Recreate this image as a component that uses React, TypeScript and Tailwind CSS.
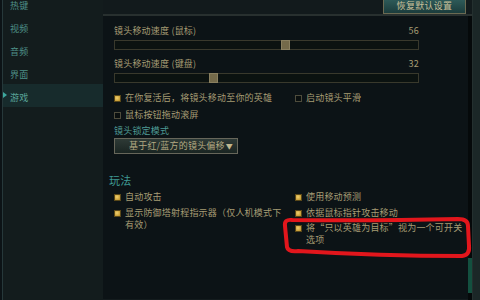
import React from "react";

const FONT = { fontFamily: '"Noto Sans CJK SC", "Noto Sans", sans-serif' };

function Check({ on }: { on?: boolean }) {
  return on ? (
    <span className="mt-[3px] shrink-0 w-[7px] h-[7px] border border-[#5a4818] bg-[radial-gradient(circle_at_40%_40%,#f0d070,#b88a20)]" />
  ) : (
    <span className="mt-[3px] shrink-0 w-[7px] h-[7px] border border-[#4e4c3c] bg-[#0a0f0f]" />
  );
}

function Opt({ on, children }: { on?: boolean; children: React.ReactNode }) {
  return (
    <div className="flex items-start gap-[4px] text-[9px] leading-[12px] tracking-[0.2px] text-[#a69c74]">
      <Check on={on} />
      <span className="whitespace-nowrap">{children}</span>
    </div>
  );
}

function Slider({ pos }: { pos: number }) {
  return (
    <div className="relative h-[10px] border border-[#39392c] bg-[#0b1210]">
      <div
        className="absolute top-[-1px] h-[10px] w-[9px] border border-[#8a8060] bg-[#746a4a]"
        style={{ left: pos }}
      />
    </div>
  );
}

export default function App() {
  const items = ["热键", "视频", "音频", "界面", "游戏"];
  return (
    <div
      style={FONT}
      className="relative w-[480px] h-[300px] overflow-hidden bg-[#0c1316] flex"
    >
      {/* sidebar */}
      <div className="shrink-0 ml-[2px] w-[101px] h-full border-l border-[#26383a] bg-[#131c1d] flex flex-col">
        <div className="mt-[-8px]">
          {items.map((t, i) => (
            <div
              key={t}
              className={
                "relative h-[23px] flex items-center pl-[7px] text-[9px] tracking-[0.3px] text-[#4e9088] " +
                (i === 4 ? "bg-[#172b2c] text-[#5aa69b]" : "")
              }
            >
              {i === 4 && (
                <span className="absolute left-[0px] top-[8px] w-0 h-0 border-y-[3px] border-y-transparent border-l-[4px] border-l-[#3ea89e]" />
              )}
              <span className="mt-[4px]">{t}</span>
            </div>
          ))}
        </div>
      </div>

      {/* main */}
      <div className="flex-1 min-w-0 flex flex-col">
        <div className="h-[14px] bg-[#121a1c] flex justify-end pr-[6px]">
          <div className="mt-[-2px] h-[16px] w-[83px] border border-[#6b6a52] bg-[linear-gradient(#2f5c5a,#1b3c3c)] flex items-center justify-center text-[9px] tracking-[0.3px] text-[#c9c09c]">
            恢复默认设置
          </div>
        </div>
        <div className="h-[2px] bg-[#28302f]" />
        <div className="flex-1 flex min-w-0">
          <div className="flex-1 min-w-0 pl-[6px] pr-[49px] border-b border-[#141c1e]">
            <div className="ml-[5px]">
              <div className="mt-[9px] h-[12px] flex justify-between items-center text-[9px] tracking-[0.2px] text-[#a69c74]">
                <span>镜头移动速度 (鼠标)</span>
                <span>56</span>
              </div>
              <div className="mt-[3px]">
                <Slider pos={166} />
              </div>
              <div className="mt-[8px] h-[12px] flex justify-between items-center text-[9px] tracking-[0.2px] text-[#a69c74]">
                <span>镜头移动速度 (键盘)</span>
                <span>32</span>
              </div>
              <div className="mt-[3px]">
                <Slider pos={94} />
              </div>
              <div className="mt-[9px] grid grid-cols-[181px_1fr]">
                <Opt on>在你复活后，将镜头移动至你的英雄</Opt>
                <Opt>启动镜头平滑</Opt>
              </div>
              <div className="mt-[5px]">
                <Opt>鼠标按钮拖动滚屏</Opt>
              </div>
              <div className="mt-[4px] h-[12px] flex items-center text-[9px] tracking-[0.2px] text-[#4e9a94]">
                镜头锁定模式
              </div>
              <div className="mt-[1px] w-[124px] h-[16px] border border-[#67665a] bg-[linear-gradient(#2e3a36,#1a2522)] flex items-center pl-[14px] pr-[4px] justify-between text-[9px] tracking-[0.2px] text-[#b3a982]">
                <span>基于红/蓝方的镜头偏移</span>
                <span className="text-[7px] text-[#c0b890]">▼</span>
              </div>
            </div>
            <div className="mt-[19px] h-[14px] flex items-center text-[11px] tracking-[0.3px] text-[#3f9a94]">
              玩法
            </div>
            <div className="ml-[5px] mt-[4px] grid grid-cols-[181px_1fr]">
              <div className="flex flex-col gap-[4px]">
                <Opt on>自动攻击</Opt>
                <Opt on>
                  显示防御塔射程指示器（仅人机模式下
                  <br />
                  有效）
                </Opt>
              </div>
              <div className="flex flex-col">
                <Opt on>使用移动预测</Opt>
                <div className="mt-[4px]">
                  <Opt on>依据鼠标指针攻击移动</Opt>
                </div>
                <div className="mt-[3px]">
                  <Opt on>
                    将“只以英雄为目标”视为一个可开关
                    <br />
                    选项
                  </Opt>
                </div>
              </div>
            </div>
          </div>
          <div className="shrink-0 w-[4px] bg-[#05090a] flex flex-col justify-end pb-[7px]">
            <div className="h-[35px] bg-[#13503f]" />
          </div>
        </div>
      </div>

      {/* right strip */}
      <div className="shrink-0 w-[8px] h-full bg-[#1b2727] border-l border-[#24302f]" />

      {/* red annotation */}
      <svg
        className="absolute left-0 top-0 pointer-events-none"
        width="480"
        height="300"
        viewBox="0 0 480 300"
      >
        <path
          d="M 292 220 Q 284 219 285 226 L 287 247 Q 288 252 298 251 Q 380 256 462 256 Q 470 255 469 246 L 468 226 Q 468 219 458 219 Q 370 221 292 220"
          fill="none"
          stroke="#e2161c"
          strokeWidth="4"
          strokeLinecap="round"
          strokeLinejoin="round"
        />
      </svg>
    </div>
  );
}
